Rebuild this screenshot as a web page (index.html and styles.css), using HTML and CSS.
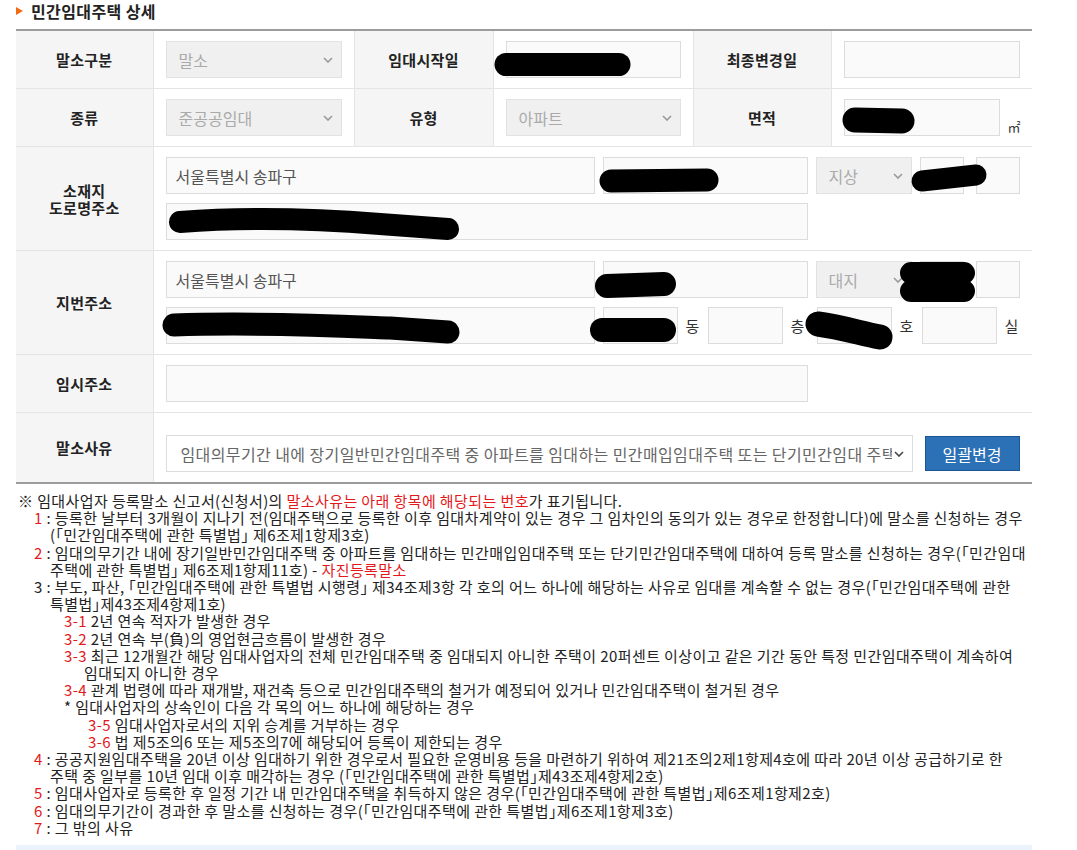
FILE: index.html
```html
<!DOCTYPE html>
<html>
<head>
	<meta charset="utf-8">
	<title>민간임대주택 상세</title>
	<link rel="stylesheet" href="styles.css">
</head>
<body>
<div class="screen">
<div class="page">

	<h2 class="title">민간임대주택 상세</h2>

	<table class="detail">
		<colgroup>
			<col class="c-th1"><col class="c-td1"><col class="c-th2"><col class="c-td2"><col class="c-th3"><col class="c-td3">
		</colgroup>
		<tr class="row">
			<th>말소구분</th>
			<td>
				<div class="sel sel-off"><span class="sel-val">말소</span><svg class="chev" viewBox="0 0 10 6"><path d="M1 1 L5 5 L9 1"/></svg></div>
			</td>
			<th>임대시작일</th>
			<td><input class="inp" type="text" readonly></td>
			<th>최종변경일</th>
			<td><input class="inp" type="text" readonly></td>
		</tr>
		<tr class="row">
			<th>종류</th>
			<td>
				<div class="sel sel-off"><span class="sel-val">준공공임대</span><svg class="chev" viewBox="0 0 10 6"><path d="M1 1 L5 5 L9 1"/></svg></div>
			</td>
			<th>유형</th>
			<td>
				<div class="sel sel-off"><span class="sel-val">아파트</span><svg class="chev" viewBox="0 0 10 6"><path d="M1 1 L5 5 L9 1"/></svg></div>
			</td>
			<th>면적</th>
			<td>
				<div class="line">
					<input class="inp w-area" type="text" readonly>
					<span class="sqm">㎡</span>
				</div>
			</td>
		</tr>
		<tr>
			<th>소재지<br>도로명주소</th>
			<td colspan="5">
				<div class="line">
					<input class="inp w-addr" type="text" readonly value="서울특별시 송파구">
					<input class="inp w-road" type="text" readonly>
					<div class="sel sel-off w-floor"><span class="sel-val">지상</span><svg class="chev" viewBox="0 0 10 6"><path d="M1 1 L5 5 L9 1"/></svg></div>
					<input class="inp w-num" type="text" readonly>
					<input class="inp w-num num-last" type="text" readonly>
				</div>
				<div class="line">
					<input class="inp w-full" type="text" readonly>
				</div>
			</td>
		</tr>
		<tr>
			<th>지번주소</th>
			<td colspan="5">
				<div class="line">
					<input class="inp w-addr" type="text" readonly value="서울특별시 송파구">
					<input class="inp w-road" type="text" readonly>
					<div class="sel sel-off w-floor"><span class="sel-val">대지</span><svg class="chev" viewBox="0 0 10 6"><path d="M1 1 L5 5 L9 1"/></svg></div>
					<input class="inp w-num" type="text" readonly>
					<input class="inp w-num num-last" type="text" readonly>
				</div>
				<div class="line">
					<input class="inp w-addr" type="text" readonly>
					<input class="inp w-dong" type="text" readonly>
					<span class="unit">동</span>
					<input class="inp w-ho" type="text" readonly>
					<span class="unit unit-floor">층</span>
					<input class="inp w-ho" type="text" readonly>
					<span class="unit">호</span>
					<input class="inp w-ho" type="text" readonly>
					<span class="unit">실</span>
				</div>
			</td>
		</tr>
		<tr class="row">
			<th>임시주소</th>
			<td colspan="5"><input class="inp w-full" type="text" readonly></td>
		</tr>
		<tr>
			<th>말소사유</th>
			<td colspan="5" class="reason">
				<div class="line">
					<div class="sel w-reason"><span class="sel-val">임대의무기간 내에 장기일반민간임대주택 중 아파트를 임대하는 민간매입임대주택 또는 단기민간임대 주택에 대하여 등록 말소를 신청하는 경우</span><svg class="chev" viewBox="0 0 10 6"><path d="M1 1 L5 5 L9 1"/></svg></div>
					<button class="btn-blue">일괄변경</button>
				</div>
			</td>
		</tr>
	</table>

	<div class="notes">
		<p>※ 임대사업자 등록말소 신고서(신청서)의 <span class="red">말소사유는 아래 항목에 해당되는 번호</span>가 표기됩니다.</p>
		<p class="item"><span class="red">1</span> : 등록한 날부터 3개월이 지나기 전(임대주택으로 등록한 이후 임대차계약이 있는 경우 그 임차인의 동의가 있는 경우로 한정합니다)에 말소를 신청하는 경우<br>(「민간임대주택에 관한 특별법」 제6조제1항제3호)</p>
		<p class="item"><span class="red">2</span> : 임대의무기간 내에 장기일반민간임대주택 중 아파트를 임대하는 민간매입임대주택 또는 단기민간임대주택에 대하여 등록 말소를 신청하는 경우(「민간임대<br>주택에 관한 특별법」 제6조제1항제11호) - <span class="red">자진등록말소</span></p>
		<p class="item">3 : 부도, 파산, 「민간임대주택에 관한 특별법 시행령」 제34조제3항 각 호의 어느 하나에 해당하는 사유로 임대를 계속할 수 없는 경우(「민간임대주택에 관한<br>특별법」제43조제4항제1호)</p>
		<p class="sub"><span class="red">3-1</span> 2년 연속 적자가 발생한 경우</p>
		<p class="sub"><span class="red">3-2</span> 2년 연속 부(負)의 영업현금흐름이 발생한 경우</p>
		<p class="sub"><span class="red">3-3</span> 최근 12개월간 해당 임대사업자의 전체 민간임대주택 중 임대되지 아니한 주택이 20퍼센트 이상이고 같은 기간 동안 특정 민간임대주택이 계속하여<br>임대되지 아니한 경우</p>
		<p class="sub"><span class="red">3-4</span> 관계 법령에 따라 재개발, 재건축 등으로 민간임대주택의 철거가 예정되어 있거나 민간임대주택이 철거된 경우</p>
		<p class="star">* 임대사업자의 상속인이 다음 각 목의 어느 하나에 해당하는 경우</p>
		<p class="sub2"><span class="red">3-5</span> 임대사업자로서의 지위 승계를 거부하는 경우</p>
		<p class="sub2"><span class="red">3-6</span> 법 제5조의6 또는 제5조의7에 해당되어 등록이 제한되는 경우</p>
		<p class="item"><span class="red">4</span> : 공공지원임대주택을 20년 이상 임대하기 위한 경우로서 필요한 운영비용 등을 마련하기 위하여 제21조의2제1항제4호에 따라 20년 이상 공급하기로 한<br>주택 중 일부를 10년 임대 이후 매각하는 경우 (「민간임대주택에 관한 특별법」제43조제4항제2호)</p>
		<p class="item"><span class="red">5</span> : 임대사업자로 등록한 후 일정 기간 내 민간임대주택을 취득하지 않은 경우(「민간임대주택에 관한 특별법」제6조제1항제2호)</p>
		<p class="item"><span class="red">6</span> : 임대의무기간이 경과한 후 말소를 신청하는 경우(「민간임대주택에 관한 특별법」제6조제1항제3호)</p>
		<p class="item"><span class="red">7</span> : 그 밖의 사유</p>
	</div>

	<div class="next-box"></div>

</div>

<!-- blacked out values -->
<svg class="redact" viewBox="0 0 1077 850">
	<path d="M506 64.5 L619 64.5" stroke-width="23"/>
	<path d="M855 120 L902 121" stroke-width="25"/>
	<path d="M611 181 L707 180" stroke-width="23"/>
	<path d="M922 181 L976 175" stroke-width="21"/>
	<path d="M180 222 C260 216 330 220 380 224 L448 229" stroke-width="22"/>
	<path d="M607 286 L664 284" stroke-width="24"/>
	<path d="M911 273 L964 273 M911 291 L964 291" stroke-width="22"/>
	<path d="M174 325 C260 322 340 326 390 328 L448 332" stroke-width="23"/>
	<path d="M602 330 L664 330" stroke-width="24"/>
	<path d="M818 324 C840 327 860 333 880 337" stroke-width="25"/>
</svg>
</div>
</body>
</html>
```

FILE: styles.css
```css
*, *::before, *::after{
	box-sizing: border-box;
}
body{
	margin: 0;
	background: #fff;
	color: #222;
	font-family: "Noto Sans CJK KR", "Noto Sans", sans-serif;
}
.screen{
	position: relative;
	width: 1077px;
	height: 850px;
	overflow: hidden;
}
.page{
	width: 1016px;
	margin-left: 16px;
}

/* title */
.title{
	position: relative;
	margin: 0;
	height: 29px;
	padding: 0 0 0 15px;
	font-size: 16px;
	font-weight: 700;
	letter-spacing: 0.4px;
	line-height: 22px;
}
.title::before{
	content: "";
	position: absolute;
	left: 0;
	top: 7px;
	border-left: 7px solid #f26a12;
	border-top: 4.5px solid transparent;
	border-bottom: 4.5px solid transparent;
}

/* detail table */
.detail{
	width: 100%;
	border-collapse: collapse;
	table-layout: fixed;
	border-top: 2px solid #9c9c9c;
	border-bottom: 2px solid #9c9c9c;
}
.c-th1{ width: 137px; }
.c-td1{ width: 201px; }
.c-th2{ width: 139px; }
.c-td2{ width: 200px; }
.c-th3{ width: 138px; }
.c-td3{ width: 201px; }
.detail th{
	background: #f5f5f5;
	font-size: 15px;
	font-weight: 700;
	letter-spacing: 0.3px;
	line-height: 17px;
	text-align: center;
	border-bottom: 1px solid #e4e4e4;
	border-right: 1px solid #e4e4e4;
}
.detail td{
	padding: 10px 12px;
	border-bottom: 1px solid #e4e4e4;
	border-right: 1px solid #e4e4e4;
}
.detail td:last-child{
	border-right: none;
}
.detail td.reason{
	padding: 22px 12px 10px;
}
.line{
	display: flex;
	align-items: center;
	gap: 8px;
}
.line + .line{
	margin-top: 9px;
}

/* fields */
.inp{
	display: block;
	width: 100%;
	height: 37px;
	margin: 0;
	padding: 0 9px;
	border: 1px solid #dcdcdc;
	background: #fafafa;
	color: #555;
	font-family: inherit;
	font-size: 16px;
	outline: none;
}
.sel{
	display: flex;
	align-items: center;
	justify-content: space-between;
	height: 37px;
	padding: 0 8px 0 12px;
	border: 1px solid #dcdcdc;
	background: #fff;
	color: #666;
	font-size: 16px;
	overflow: hidden;
}
.sel-off{
	background: #f0f0f0;
	border-color: #e2e2e2;
	color: #aaa;
}
.sel-val{
	flex: 1;
	white-space: nowrap;
	overflow: hidden;
}
.chev{
	flex: none;
	width: 10px;
	height: 6px;
	margin-left: 4px;
	fill: none;
	stroke: #999;
	stroke-width: 1.6;
}
.w-reason{
	width: 747px;
	flex: none;
	padding-left: 14px;
	letter-spacing: 0.4px;
}
.w-reason .chev{
	stroke: #444;
	margin-left: 2px;
}
.w-area{ width: 156px; }
.sqm{
	align-self: flex-end;
	font-size: 13px;
	color: #333;
	line-height: 14px;
	padding-bottom: 2px;
}
.w-addr{ width: 429px; flex: none; }
.w-road{ width: 205px; flex: none; }
.w-floor{ width: 96px; flex: none; }
.w-num{ width: 44px; flex: none; }
.num-last{ margin-left: 4px; }
.w-full{ width: 642px; }
.w-dong{ width: 75px; flex: none; }
.w-ho{ width: 75px; flex: none; }
.unit{
	width: 14px;
	font-size: 15px;
	color: #333;
	text-align: center;
	flex: none;
}
.unit-floor{
	margin-right: 4px;
}
.btn-blue{
	width: 95px;
	height: 35px;
	margin-left: 4px;
	background: #2c70b6;
	border: 1px solid #1b5593;
	color: #fff;
	font-family: inherit;
	font-size: 16px;
	cursor: pointer;
}

/* notes */
.notes{
	margin-top: 8px;
	padding-left: 2px;
	font-size: 15px;
	letter-spacing: 0.4px;
	line-height: 17.2px;
	color: #222;
	white-space: nowrap;
	font-feature-settings: "halt";
}
.notes p{
	margin: 0;
}
.red{
	color: #e3191c;
}
.notes .item{
	padding-left: 32px;
	text-indent: -16px;
}
.notes .sub{
	padding-left: 66px;
	text-indent: -20px;
}
.notes .star{
	padding-left: 46px;
}
.notes .sub2{
	padding-left: 70px;
}

.next-box{
	margin-top: 9px;
	height: 30px;
	background: #ebf3fc;
}

/* redaction marks */
.redact{
	position: absolute;
	left: 0;
	top: 0;
	width: 1077px;
	height: 850px;
	pointer-events: none;
}
.redact path{
	fill: none;
	stroke: #000;
	stroke-linecap: round;
	stroke-linejoin: round;
}
```
